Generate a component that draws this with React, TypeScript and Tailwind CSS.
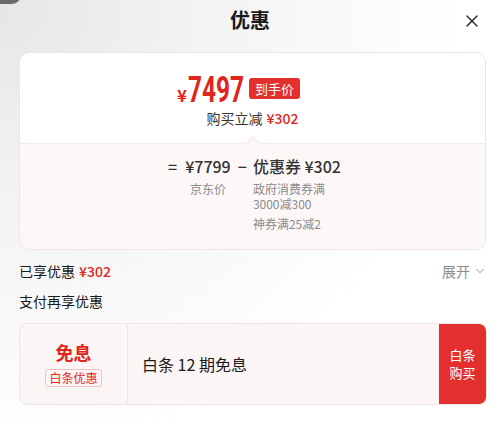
import { ChevronDown, X } from "lucide-react";

export default function App() {
  return (
    <div className="relative w-[500px] h-[424px] overflow-hidden bg-[radial-gradient(circle_at_0%_0%,#e6e6e6_0%,#f3f3f3_30%,#ffffff_70%)] font-['Noto_Sans_CJK_SC','Noto_Sans',sans-serif] text-[#1a1a1a]">
      {/* corner of the page behind the sheet */}
      <div className="absolute -left-[30px] -top-[18px] w-[52px] h-[22px] rounded-full bg-[#6b6b6b]" />

      <div className="relative flex h-[40px] items-center justify-center">
        <span className="text-[20px] font-bold leading-none text-[#1a1a1a]">优惠</span>
        <X className="absolute right-[18px] top-[11px] size-[20px] text-[#222]" strokeWidth={1.6} />
      </div>

      <div className="ml-[19px] mr-[14px] mt-[12px] overflow-hidden rounded-[10px] border border-[#f2e4e4]">
        <div className="flex h-[90px] flex-col items-center bg-white pt-[23px]">
          <div className="flex items-end pr-[28px]">
            <span className="mb-[1px] text-[17px] font-bold leading-none text-[#e1251b]">¥</span>
            <span className="ml-[1px] inline-block h-[28px] w-[54px] overflow-visible">
              <span className="inline-block origin-left scale-x-[0.66] font-['Roboto',sans-serif] text-[37px] font-bold leading-[28px] text-[#e1251b]">7497</span>
            </span>
            <span className="mb-[5px] ml-[7px] flex h-[21px] items-center rounded-[3px] bg-[#e3302f] px-[6px] text-[13px] leading-none text-white">到手价</span>
          </div>
          <div className="mt-[7px] flex items-center text-[14px] leading-none text-[#333]">
            <span>购买立减</span>
            <span className="ml-[4px] font-medium text-[#e1251b]">¥302</span>
          </div>
        </div>

        <div className="relative h-[106px] border-t border-[#f6eaea] bg-[#fdf7f7]">
          <div className="absolute left-[228px] -top-[6px] size-[10px] rotate-45 border-l border-t border-[#f6eaea] bg-[#fdf7f7]" />
          <div className="flex justify-center pt-[11px] pl-[4px]">
            <div className="flex items-start text-[#333]">
              <span className="text-[16px] font-medium leading-[22px]">=</span>
              <div className="ml-[8px] flex flex-col items-center">
                <span className="text-[16px] font-medium leading-[22px]">¥7799</span>
                <span className="mt-[4px] text-[12px] leading-[16px] text-[#8c8c8c]">京东价</span>
              </div>
              <span className="ml-[7px] text-[16px] font-medium leading-[22px]">−</span>
              <div className="ml-[6px] flex flex-col">
                <span className="text-[16px] font-medium leading-[22px]">优惠券 ¥302</span>
                <p className="mt-[4px] w-[78px] text-[12px] leading-[15px] text-[#8c8c8c]">政府消费券满3000减300</p>
                <p className="mt-[5px] text-[12px] leading-[15px] text-[#8c8c8c]">神券满25减2</p>
              </div>
            </div>
          </div>
        </div>
      </div>

      <div className="ml-[19px] mr-[13px] mt-[11px] flex h-[20px] items-center justify-between text-[14px]">
        <div className="flex items-center">
          <span className="text-[#1a1a1a]">已享优惠</span>
          <span className="ml-[4px] font-medium text-[#e1251b]">¥302</span>
        </div>
        <div className="flex items-center text-[#8c8c8c]">
          <span>展开</span>
          <ChevronDown className="ml-[3px] size-[14px]" strokeWidth={1.6} />
        </div>
      </div>

      <div className="mx-[19px] mt-[10px] h-[20px] text-[14px] leading-[20px] text-[#1a1a1a]">支付再享优惠</div>

      <div className="ml-[19px] mr-[13px] mt-[12px] flex h-[82px] overflow-hidden rounded-[8px] border border-[#f1e6e6] bg-[#fbf5f5]">
        <div className="flex w-[108px] flex-col items-center justify-center border-r border-[#f1e6e6]">
          <span className="text-[18px] font-bold leading-[22px] text-[#e1251b]">免息</span>
          <span className="mt-[6px] rounded-[3px] border border-[#f0c3c3] px-[3px] text-[12px] leading-[16px] text-[#e1251b]">白条优惠</span>
        </div>
        <div className="flex flex-1 items-center pl-[14px] text-[16px] text-[#1a1a1a]">白条 12 期免息</div>
        <div className="flex w-[47px] flex-col items-center justify-center bg-[#e3302f] text-[13px] leading-[18px] text-white">
          <span>白条</span>
          <span>购买</span>
        </div>
      </div>
    </div>
  );
}
